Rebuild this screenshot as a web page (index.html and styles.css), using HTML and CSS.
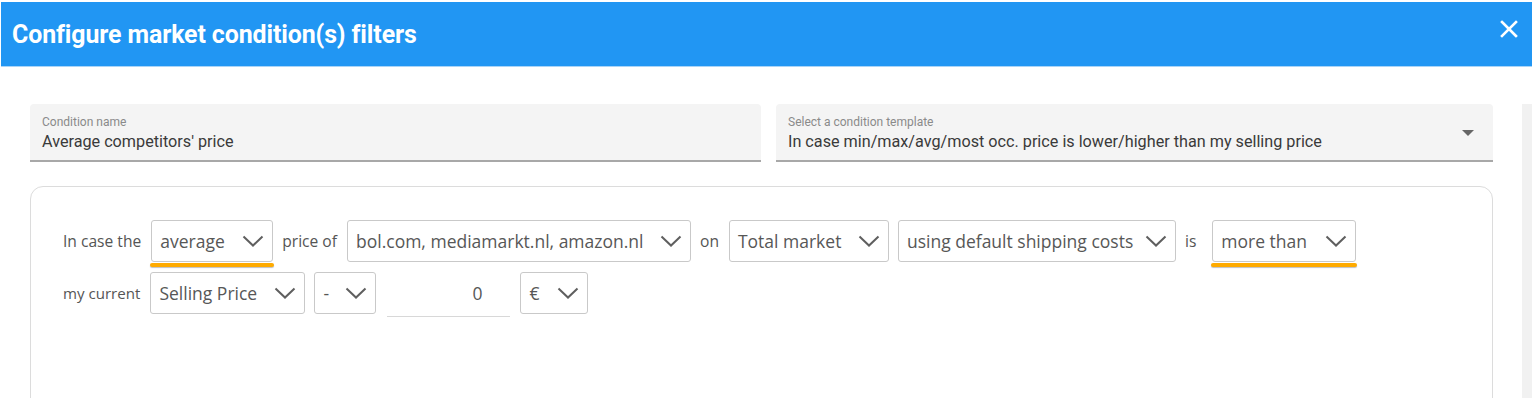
FILE: index.html
```html
<!DOCTYPE html>
<html>
<head>
<meta charset="utf-8">
<link rel="stylesheet" href="styles.css">
</head>
<body>
<div class="dialog">
  <header class="topbar">
    <h1 class="title">Configure market condition(s) filters</h1>
    <button class="close" aria-label="Close">
      <svg width="18" height="18" viewBox="0 0 18 18"><path d="M2 2 L16 16 M16 2 L2 16" stroke="#fff" stroke-width="2.6" stroke-linecap="square"/></svg>
    </button>
  </header>
  <div class="body">
    <div class="content">
      <div class="fields">
        <div class="field">
          <div class="field-label">Condition name</div>
          <div class="field-value">Average competitors' price</div>
        </div>
        <div class="field field-select">
          <div class="field-label">Select a condition template</div>
          <div class="field-value">In case min/max/avg/most occ. price is lower/higher than my selling price</div>
          <span class="caret"></span>
        </div>
      </div>
      <div class="card">
        <div class="row">
          <span class="lbl">In case the</span>
          <div class="sel hl w-avg">average<svg class="chev" viewBox="0 0 22 12"><path d="M1.5 1.5 L11 10.5 L20.5 1.5" fill="none" stroke="#5f5f5f" stroke-width="2"/></svg></div>
          <span class="lbl">price of</span>
          <div class="sel w-shops">bol.com, mediamarkt.nl, amazon.nl<svg class="chev" viewBox="0 0 22 12"><path d="M1.5 1.5 L11 10.5 L20.5 1.5" fill="none" stroke="#5f5f5f" stroke-width="2"/></svg></div>
          <span class="lbl">on</span>
          <div class="sel w-market">Total market<svg class="chev" viewBox="0 0 22 12"><path d="M1.5 1.5 L11 10.5 L20.5 1.5" fill="none" stroke="#5f5f5f" stroke-width="2"/></svg></div>
          <div class="sel w-ship">using default shipping costs<svg class="chev" viewBox="0 0 22 12"><path d="M1.5 1.5 L11 10.5 L20.5 1.5" fill="none" stroke="#5f5f5f" stroke-width="2"/></svg></div>
          <span class="lbl">is</span>
          <div class="sel hl w-more">more than<svg class="chev" viewBox="0 0 22 12"><path d="M1.5 1.5 L11 10.5 L20.5 1.5" fill="none" stroke="#5f5f5f" stroke-width="2"/></svg></div>
        </div>
        <div class="row">
          <span class="lbl lbl-sm">my current</span>
          <div class="sel w-sell">Selling Price<svg class="chev" viewBox="0 0 22 12"><path d="M1.5 1.5 L11 10.5 L20.5 1.5" fill="none" stroke="#5f5f5f" stroke-width="2"/></svg></div>
          <div class="sel w-op">-<svg class="chev" viewBox="0 0 22 12"><path d="M1.5 1.5 L11 10.5 L20.5 1.5" fill="none" stroke="#5f5f5f" stroke-width="2"/></svg></div>
          <div class="num">0</div>
          <div class="sel w-cur">€<svg class="chev" viewBox="0 0 22 12"><path d="M1.5 1.5 L11 10.5 L20.5 1.5" fill="none" stroke="#5f5f5f" stroke-width="2"/></svg></div>
        </div>
      </div>
    </div>
    <div class="scrolltrack"></div>
  </div>
</div>
</body>
</html>
```
FILE: styles.css
```css
html, body {
  margin: 0;
  padding: 0;
  background: #fff;
  overflow: hidden;
}
.dialog {
  width: 1532px;
  height: 398px;
  overflow: hidden;
  padding-top: 2px;
  padding-left: 1px;
  box-sizing: border-box;
}
.topbar {
  height: 64px;
  background: #2196f3;
  display: flex;
  align-items: center;
  justify-content: space-between;
  padding: 0 14px 0 11px;
  box-shadow: 0 1px 0 #a9d4f8;
}
.title {
  margin: 0;
  font-family: Roboto, "Liberation Sans", sans-serif;
  font-weight: 700;
  font-size: 24.9px;
  color: #fff;
  letter-spacing: -0.1px;
}
.close {
  background: none;
  border: 0;
  padding: 0;
  width: 18px;
  height: 18px;
  margin-top: -10px;
  display: flex;
}
.body {
  display: flex;
  padding-top: 38px;
}
.content {
  width: 1463px;
  margin-left: 29px;
}
.scrolltrack {
  width: 10px;
  margin-left: 29px;
  height: 300px;
  background: #f1f1f1;
}
.fields {
  display: grid;
  grid-template-columns: 731fr 717fr;
  gap: 15px;
}
.field {
  position: relative;
  height: 58px;
  background: #f4f4f4;
  border-bottom: 2px solid #a8a8a8;
  border-radius: 4px 4px 0 0;
  box-sizing: border-box;
  padding: 11px 12px 0;
  font-family: Roboto, "Liberation Sans", sans-serif;
}
.field-label {
  font-size: 12px;
  color: #8a8a8a;
  line-height: 14px;
}
.field-value {
  font-size: 16.2px;
  color: #3a3a3a;
  line-height: 20px;
  margin-top: 3px;
}
.caret {
  position: absolute;
  right: 19px;
  top: 26px;
  width: 0;
  height: 0;
  border-left: 6px solid transparent;
  border-right: 6px solid transparent;
  border-top: 6px solid #666;
}
.card {
  margin-top: 24px;
  height: 240px;
  border: 1px solid #dcdcdc;
  border-radius: 13px;
  padding: 33px 32px;
  box-sizing: border-box;
  display: flex;
  flex-direction: column;
  gap: 10px;
  font-family: "Open Sans", "Liberation Sans", sans-serif;
}
.row {
  display: flex;
  align-items: center;
  gap: 9px;
  height: 42px;
}
.lbl {
  font-size: 15.6px;
  color: #555;
  padding-right: 1px;
}
.lbl-sm {
  font-size: 15.1px;
}
.sel {
  position: relative;
  height: 42px;
  box-sizing: border-box;
  border: 1px solid #c9c9c9;
  border-radius: 3px;
  display: flex;
  align-items: center;
  justify-content: space-between;
  padding: 0 8px 1px 8px;
  font-size: 17.5px;
  color: #575757;
  white-space: nowrap;
}
.chev {
  width: 22px;
  height: 12px;
  flex: none;
}
.hl::after {
  content: "";
  position: absolute;
  left: -2px;
  right: -2px;
  bottom: -6px;
  height: 4px;
  border-radius: 3px;
  background: #ffab00;
  box-shadow: 0 1px 1px rgba(0,0,0,0.25);
}
.w-avg { width: 122px; }
.w-shops { width: 344px; }
.w-market { width: 160px; }
.w-ship { width: 278px; }
.w-more { width: 144px; margin-left: 6px; }
.w-sell { width: 155px; }
.w-op { width: 62px; }
.w-cur { width: 68px; }
.num {
  width: 123px;
  height: 42px;
  margin: 0 1px -5px 2px;
  box-sizing: border-box;
  border-bottom: 1px solid #d8d8d8;
  display: flex;
  align-items: center;
  justify-content: flex-end;
  padding: 0 28px 5px 0;
  font-size: 17.5px;
  color: #575757;
}
```
